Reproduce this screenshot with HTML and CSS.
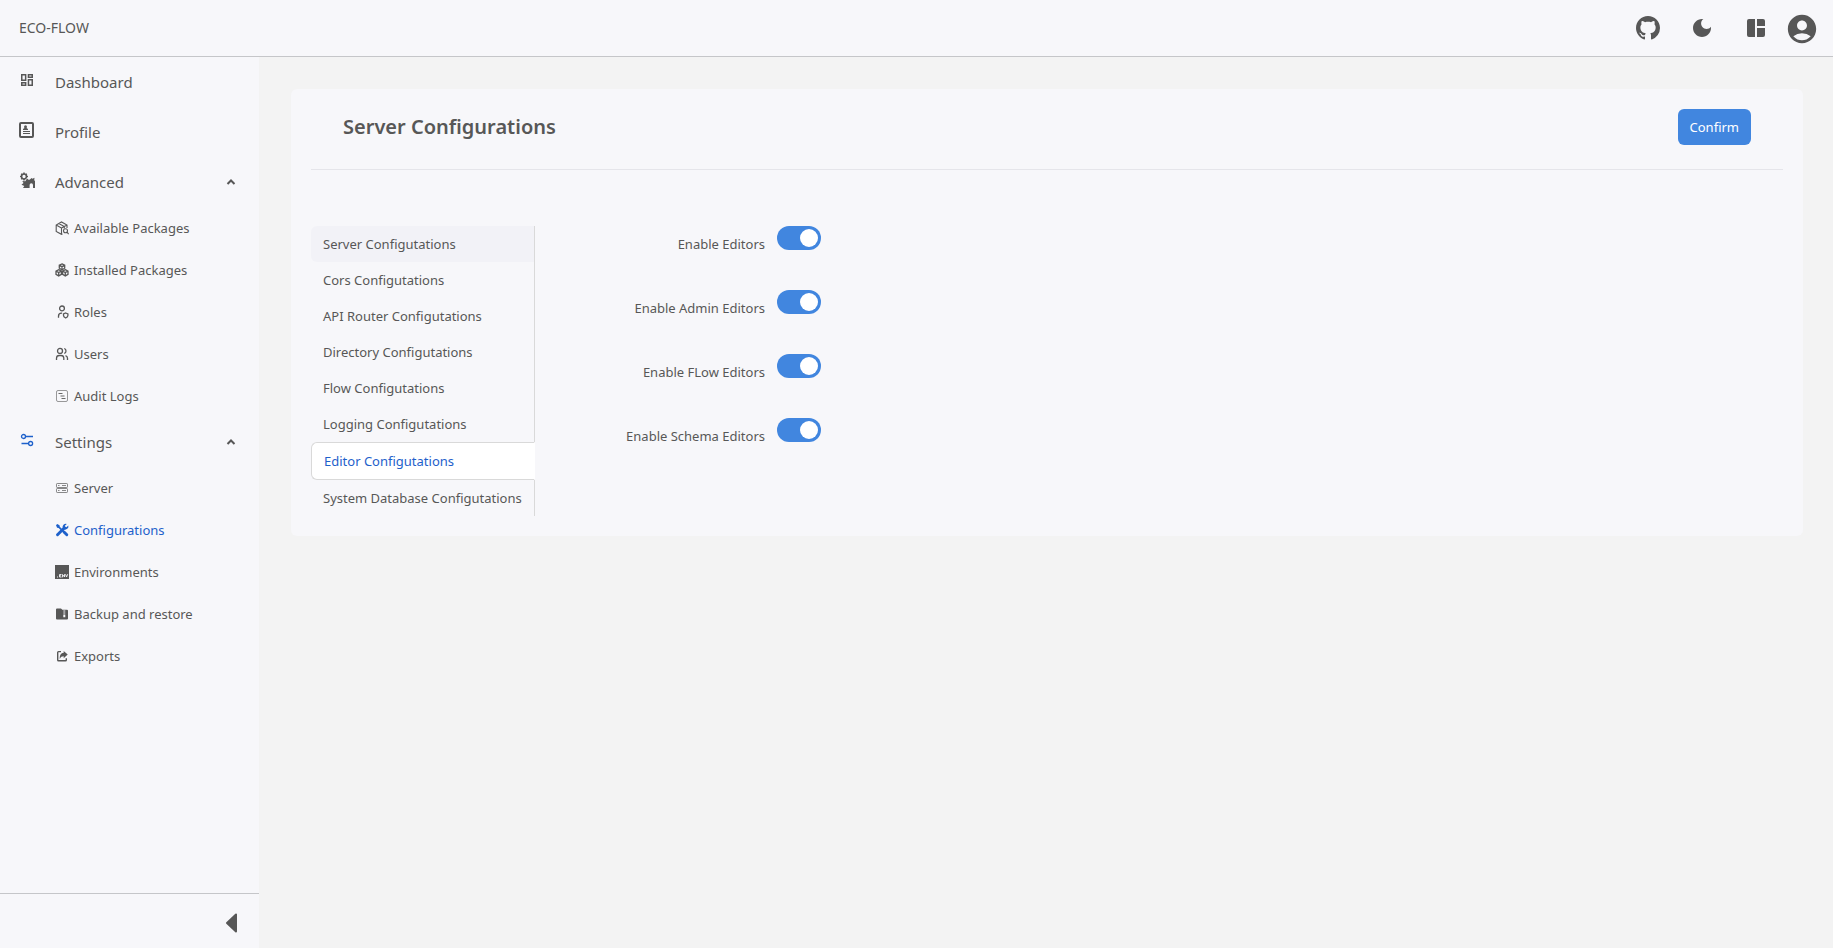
FILE: index.html
```html
<!DOCTYPE html>
<html lang="en">
<head>
<meta charset="utf-8">
<title>ECO-FLOW</title>
<link rel="stylesheet" href="styles.css">
</head>
<body>
<div class="app">
  <header class="topbar">
    <a class="brand" href="#">ECO-FLOW</a>
    <div class="tools">
      <a class="tool" href="#" aria-label="GitHub"><svg width="24" height="24" viewBox="0 0 16 16"><path d="M8 0C3.58 0 0 3.58 0 8c0 3.54 2.29 6.53 5.47 7.59.4.07.55-.17.55-.38 0-.19-.01-.82-.01-1.49-2.01.37-2.53-.49-2.69-.94-.09-.23-.48-.94-.82-1.13-.28-.15-.68-.52-.01-.53.63-.01 1.08.58 1.23.82.72 1.21 1.87.87 2.33.66.07-.52.28-.87.51-1.07-1.78-.2-3.64-.89-3.64-3.95 0-.87.31-1.59.82-2.15-.08-.2-.36-1.02.08-2.12 0 0 .67-.21 2.2.82.64-.18 1.32-.27 2-.27s1.36.09 2 .27c1.53-1.04 2.2-.82 2.2-.82.44 1.1.16 1.92.08 2.12.51.56.82 1.27.82 2.15 0 3.07-1.87 3.75-3.65 3.95.29.25.54.73.54 1.48 0 1.07-.01 1.93-.01 2.2 0 .21.15.46.55.38A8.01 8.01 0 0016 8c0-4.42-3.58-8-8-8z"/></svg></a>
      <button class="tool" type="button" aria-label="Dark mode"><svg width="24" height="24" viewBox="0 0 24 24"><path d="M12 3c-4.970 0-9 4.030-9 9s4.030 9 9 9 9-4.030 9-9c0-.46-.04-.92-.1-1.360-.98 1.370-2.580 2.260-4.400 2.260-2.980 0-5.400-2.420-5.400-5.400 0-1.810.89-3.420 2.260-4.400-.44-.06-.9-.1-1.360-.1z"/></svg></button>
      <button class="tool" type="button" aria-label="Layout"><svg width="24" height="24" viewBox="0 0 24 24"><path d="M11 21H5a2 2 0 0 1-2-2V5a2 2 0 0 1 2-2h6zM13 21h6a2 2 0 0 0 2-2v-7h-8zM21 10V5a2 2 0 0 0-2-2h-6v7z"/></svg></button>
      <button class="avatar" type="button" aria-label="Account"><svg width="34" height="34" viewBox="0 0 24 24"><path d="M12 2C6.48 2 2 6.48 2 12s4.48 10 10 10 10-4.48 10-10S17.52 2 12 2zm0 4c1.93 0 3.5 1.57 3.5 3.5S13.93 13 12 13s-3.5-1.57-3.5-3.5S10.07 6 12 6zm0 14c-2.03 0-4.43-.82-6.14-2.88a9.947 9.947 0 0 1 12.28 0C16.43 19.18 14.03 20 12 20z"/></svg></button>
    </div>
  </header>

  <div class="body">
    <aside class="sidebar">
      <nav class="menu" aria-label="Main">
        <a class="item" href="#"><span class="item-icon"><svg width="16" height="16" viewBox="0 0 16 16"><path fill-rule="evenodd" d="M2 2h5.400v7H2zM3.500 3.500v4h2.400v-4zM8.700 2H14v4H8.700zM10.200 3.400v1.200h2.300V3.400zM2 10h5.400v4H2zM3.500 11.400v1.200h2.400v-1.200zM8.700 7H14v7H8.700zM10.200 8.500v4h2.300v-4z"/></svg></span><span>Dashboard</span></a>
        <a class="item" href="#"><span class="item-icon"><svg width="16" height="16" viewBox="0 0 16 16"><rect x="1" y="1" width="13" height="14" rx="1" fill="none" stroke="currentColor" stroke-width="2"/><circle cx="6.500" cy="4.800" r="1.500"/><path d="M4 8V7l1.500-1h2L9 7v1zM4 9h7v1H4zM4 11h7v1H4z"/></svg></span><span>Profile</span></a>
        <button class="item" type="button" aria-expanded="true"><span class="item-icon"><svg width="16" height="16" viewBox="0 0 16 16"><circle cx="5" cy="4.500" r="2.400" fill="none" stroke="currentColor" stroke-width="1.500"/><path d="M5 .5v1.500M5 7v1.500M1 4.500h1.500M7.500 4.500H9M2.200 1.700l1 1M7.800 1.700l-1 1M2.200 7.300l1-1" stroke="currentColor" stroke-width="1.500"/><path d="M8 6.500l2 1.500 1.500-1L12.500 6l1 .8 2-1-.3 2.500.8.700v7h-2v-3a1.700 1.700 0 0 0-3.400 0v3H4l1.300-2L2.500 12.800l2-1.800L3.300 9l3 .2z"/></svg></span><span>Advanced</span><svg class="caret" width="10" height="10" viewBox="0 0 10 10"><path d="M1.500 7L5 3.500 8.500 7" fill="none" stroke="currentColor" stroke-width="2"/></svg></button>
        <div class="submenu">
          <a class="sub" href="#"><svg width="14" height="14" viewBox="0 0 14 14"><path d="M7.500 13L6.500 13.300 1.200 10.500V4L6.500 1l5.500 3v3M1.200 4l5.300 3v6M6.500 7L12 4M3.800 2.500L9.300 5.500v2" fill="none" stroke="currentColor" stroke-width="1.100"/><circle cx="10.500" cy="9.700" r="2" fill="none" stroke="currentColor" stroke-width="1.100"/><path d="M12 11.200l1.700 2" stroke="currentColor" stroke-width="1.200"/></svg><span>Available Packages</span></a>
          <a class="sub" href="#"><svg width="14" height="14" viewBox="0 0 14 14"><g fill="none" stroke="currentColor" stroke-width="1.300"><path d="M7 .9l2.700 1.300v3L7 6.700 4.300 5.200v-3zM4.300 2.300L7 3.700l2.700-1.400M7 3.700v3M3.700 6.700l2.700 1.400v3.300l-2.700 1.500L1 11.400V8.100zM1 8.200l2.700 1.400 2.700-1.400M3.700 9.600v3.200M10.300 6.700L13 8.100v3.300l-2.700 1.500-2.700-1.500V8.100zM7.600 8.200l2.700 1.400L13 8.200M10.300 9.600v3.200"/></g></svg><span>Installed Packages</span></a>
          <a class="sub" href="#"><svg width="14" height="14" viewBox="0 0 14 14"><g fill="none" stroke="currentColor" stroke-width="1.300"><circle cx="7" cy="3.400" r="2.400"/><path d="M3.500 12.700v-1.500a3 3 0 0 1 3-3h.6M10.700 8l2.200.9v1.600c0 1.200-1 2-2.200 2.500-1.200-.5-2.200-1.300-2.200-2.500V8.900z"/></g></svg><span>Roles</span></a>
          <a class="sub" href="#"><svg width="14" height="14" viewBox="0 0 14 14"><g fill="none" stroke="currentColor" stroke-width="1.300"><circle cx="5" cy="3.900" r="2.500"/><path d="M1.500 13v-1.700a2.800 2.800 0 0 1 2.800-2.800h1.700a2.800 2.800 0 0 1 2.800 2.800V13M9.200 1.500a2.500 2.500 0 0 1 0 4.800M12.500 13v-1.700a2.800 2.800 0 0 0-2-2.700"/></g></svg><span>Users</span></a>
          <a class="sub" href="#"><svg width="14" height="14" viewBox="0 0 14 14"><g fill="none" stroke="currentColor" stroke-width=".6"><rect x="1.500" y="1.500" width="11" height="11" rx="1.500"/><path d="M3.500 4.500h4M5.500 7h4M6.500 9.500h4" stroke-width=".9"/></g></svg><span>Audit Logs</span></a>
        </div>
        <button class="item" type="button" aria-expanded="true"><span class="item-icon active"><svg width="16" height="16" viewBox="0 0 16 16"><g fill="none" stroke="currentColor" stroke-width="1.300"><circle cx="4.500" cy="4.500" r="2"/><path d="M6.500 4.500H14M2.500 11.500h7"/><circle cx="11.600" cy="11.500" r="2"/></g></svg></span><span>Settings</span><svg class="caret" width="10" height="10" viewBox="0 0 10 10"><path d="M1.500 7L5 3.500 8.500 7" fill="none" stroke="currentColor" stroke-width="2"/></svg></button>
        <div class="submenu">
          <a class="sub" href="#"><svg width="14" height="14" viewBox="0 0 14 14"><g fill="none" stroke="currentColor" stroke-width=".7"><rect x="1.500" y="2.500" width="11" height="4" rx=".8"/><rect x="1.500" y="7.500" width="11" height="4" rx=".8"/><path d="M3 4.500h1.500M7 4.500h4M3 9.500h1.500M7 9.500h4"/></g></svg><span>Server</span></a>
          <a class="sub active" href="#" aria-current="page"><svg width="14" height="14" viewBox="0 0 14 14"><path d="M2.500 11.700L9.500 4.700M9 9l2.800 2.800" stroke="currentColor" stroke-width="2.900" stroke-linecap="round"/><path d="M1 2.200L2.200 1l2.300 1.300.3 1.500 3 3-1.200 1.200-3-3-1.500-.3zM11.800.9L9.900 2.800l.3 1.200 1.200.3 1.900-1.900a3.300 3.300 0 0 1-4.600 3.900L7.800 5.200A3.300 3.300 0 0 1 11.800.9z"/></svg><span>Configurations</span></a>
          <a class="sub" href="#"><svg width="14" height="14" viewBox="0 0 14 14"><path d="M0 0h14v14H0z"/><path d="M2 12h1M6.500 9.500H4.500v2.500h2M4.500 10.800h1.500M7.500 12.300V9.500l2 2.500V9.200M10.500 9.200l1 2.800 1.200-2.800" fill="none" stroke="#f7f7fa" stroke-width=".9"/></svg><span>Environments</span></a>
          <a class="sub" href="#"><svg width="14" height="14" viewBox="0 0 14 14"><path fill-rule="evenodd" d="M1 2.500a1 1 0 0 1 1-1h4l1.300 1.300H12a1 1 0 0 1 1 1v7.700a1 1 0 0 1-1 1H2a1 1 0 0 1-1-1zM8.300 3.500v1h1v1h-1v1h1v1h-1v2.800h2V7.500h-1v-1h1v-1h-1v-1h1v-1z"/></svg><span>Backup and restore</span></a>
          <a class="sub" href="#"><svg width="14" height="14" viewBox="0 0 14 14"><path d="M6 2.600H3.500a.8.800 0 0 0-.8.800v7.500c0 .4.400.8.800.8h7a.8.800 0 0 0 .8-.8V9.200" fill="none" stroke="currentColor" stroke-width="1.400"/><path d="M8.700 2L12.700 5.500l-4 3.700V7.300C6.700 7.300 5.700 8 4.700 10c0-3.500 1-6 4-6.200z"/></svg><span>Exports</span></a>
        </div>
      </nav>
      <div class="sidebar-foot">
        <button class="collapse" type="button" aria-label="Collapse sidebar"><svg width="12" height="20" viewBox="0 0 12 20"><path d="M11 1.500v17L2 10z" stroke="currentColor" stroke-width="2" stroke-linejoin="round"/></svg></button>
      </div>
    </aside>

    <main class="content">
      <section class="panel">
        <div class="panel-head">
          <h1 class="title">Server Configurations</h1>
          <button class="confirm" type="button">Confirm</button>
        </div>
        <div class="panel-body">
          <nav class="tabs" aria-label="Configuration groups">
            <a class="tab hover" href="#">Server Configutations</a>
            <a class="tab" href="#">Cors Configutations</a>
            <a class="tab" href="#">API Router Configutations</a>
            <a class="tab" href="#">Directory Configutations</a>
            <a class="tab" href="#">Flow Configutations</a>
            <a class="tab" href="#">Logging Configutations</a>
            <a class="tab selected" href="#" aria-current="true">Editor Configutations</a>
            <a class="tab" href="#">System Database Configutations</a>
          </nav>
          <form class="form">
            <div class="field"><label class="label" for="editors">Enable Editors</label><input class="toggle" id="editors" type="checkbox" role="switch" checked></div>
            <div class="field"><label class="label" for="admin">Enable Admin Editors</label><input class="toggle" id="admin" type="checkbox" role="switch" checked></div>
            <div class="field"><label class="label" for="flow">Enable FLow Editors</label><input class="toggle" id="flow" type="checkbox" role="switch" checked></div>
            <div class="field"><label class="label" for="schema">Enable Schema Editors</label><input class="toggle" id="schema" type="checkbox" role="switch" checked></div>
          </form>
        </div>
      </section>
    </main>
  </div>
</div>
</body>
</html>
```
FILE: styles.css
```css
* { box-sizing: border-box; }
body {
  margin: 0;
  background: #f3f3f3;
  color: #575757;
  font: 13px/20px "Noto Sans", "Open Sans", sans-serif;
}
a { color: inherit; text-decoration: none; }
button {
  border: 0;
  padding: 0;
  background: none;
  color: inherit;
  font: inherit;
  text-align: left;
  cursor: pointer;
}
svg { display: block; flex: none; fill: currentColor; }

.app { display: flex; flex-direction: column; min-height: 100vh; }
.topbar {
  display: flex;
  align-items: center;
  justify-content: space-between;
  height: 57px;
  padding: 0 14px 0 19px;
  background: #f7f7fa;
  border-bottom: 1px solid #c5c6c9;
}
.brand { font-size: 14px; }
.tools { display: flex; align-items: center; gap: 30px; }
.tool { display: block; }
.avatar { margin-left: -13px; padding-top: 2px; }

.body { display: flex; flex: 1; }
.sidebar {
  display: flex;
  flex-direction: column;
  flex: none;
  width: 259px;
  background: #f7f7fa;
}
.menu { flex: 1; }
.item {
  display: flex;
  align-items: center;
  width: 100%;
  height: 50px;
  padding: 0 23px 0 19px;
  font-size: 15px;
}
.item-icon { width: 36px; padding-bottom: 4px; }
.caret { margin-left: auto; }
.sub {
  display: flex;
  align-items: center;
  gap: 5px;
  height: 42px;
  padding-left: 55px;
}
.active { color: #1e61cb; }
.sidebar-foot {
  display: flex;
  align-items: center;
  justify-content: flex-end;
  height: 55px;
  padding: 3px 22px 0 0;
  border-top: 1px solid #c5c6c9;
}

.content { flex: 1; padding: 32px 30px 32px 32px; }
.panel { padding: 20px; background: #f7f7fa; border-radius: 6px; }
.panel-head {
  display: flex;
  align-items: flex-start;
  justify-content: space-between;
  height: 61px;
  padding: 0 32px;
  border-bottom: 1px solid #e5e5ea;
}
.title { margin: 0; font-size: 20px; line-height: 36px; font-weight: 600; }
.confirm {
  padding: 8px 12px;
  border-radius: 6px;
  background: #4186df;
  color: #fff;
}
.panel-body { display: flex; align-items: flex-start; gap: 60px; padding-top: 56px; }
.tabs { display: flex; flex-direction: column; width: 224px; }
.tab {
  padding: 8px 12px;
  border-right: 1px solid #d9d9d9;
  white-space: nowrap;
}
.tab.hover { background: #f2f2f7; border-radius: 6px 0 0 6px; }
.tab.selected {
  background: #fff;
  border: 1px solid #d9d9d9;
  border-right-color: #fff;
  border-radius: 6px 0 0 6px;
  color: #1e61cb;
}
.form { display: flex; flex-direction: column; gap: 24px; }
.field { display: flex; align-items: flex-start; gap: 12px; height: 40px; }
.label { width: 170px; padding-top: 8px; text-align: right; }
.toggle {
  appearance: none;
  display: flex;
  align-items: center;
  justify-content: flex-end;
  width: 44px;
  height: 24px;
  margin: 0;
  padding: 0 3px;
  border-radius: 12px;
  background: #4186df;
}
.toggle::before { content: ""; width: 18px; height: 18px; border-radius: 50%; background: #fff; }
.toggle:not(:checked) { justify-content: flex-start; background: #c5c6c7; }
```
